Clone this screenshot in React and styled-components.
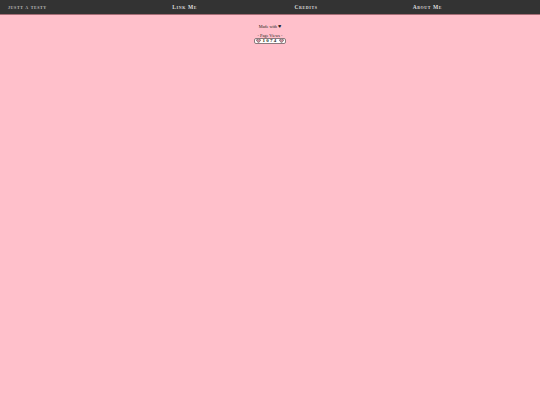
import React from "react"
import styled, { createGlobalStyle } from "styled-components"

const Global = createGlobalStyle`
  html, body {
    margin: 0;
    padding: 0;
    height: 100%;
    background: #ffc0cb;
    font-family: "Liberation Serif", serif;
  }
`

const Nav = styled.nav`
  display: flex;
  align-items: center;
  height: 14px;
  background: #333333;
  border-bottom: 1px solid #a56d76;
  color: #dddddd;
  font-variant: small-caps;
  font-weight: bold;
`

const Brand = styled.div`
  box-sizing: border-box;
  width: 124px;
  padding-left: 8px;
  font-size: 5px;
  letter-spacing: 0.6px;
  color: #bbbbbb;
`

const NavLinks = styled.div`
  width: 364px;
  display: grid;
  grid-template-columns: 1fr 1fr 1fr;
  justify-items: center;
  font-size: 5.5px;
  letter-spacing: 0.6px;
`

const Main = styled.main`
  display: flex;
  flex-direction: column;
  align-items: center;
  color: #222222;
  font-size: 4.25px;
`

const Made = styled.p`
  margin: 9px 0 0;
  line-height: 6px;
`

const MadeHeart = styled.span`
  font-size: 5.5px;
  line-height: 0;
`

const Views = styled.p`
  margin: 3px 0 0;
  line-height: 6px;
`

const Counter = styled.div`
  display: flex;
  align-items: center;
  justify-content: space-between;
  box-sizing: border-box;
  width: 32px;
  height: 6px;
  margin-top: -1px;
  padding: 0 1px;
  background: #ffffff;
  border: 1px solid #8a7a7d;
  border-radius: 2px;
  font-size: 5px;
  font-weight: bold;
  line-height: 4px;
  letter-spacing: 1.3px;
`

const HeartIcon = styled.svg`
  display: block;
  width: 5px;
  height: 4px;
`

const Heart = () => (
  <HeartIcon viewBox="0 0 10 9">
    <path
      d="M5 8.5 1 4.6C-.4 3 .6.6 2.7.6 3.7.6 4.5 1.1 5 2c.5-.9 1.3-1.4 2.3-1.4 2.1 0 3.1 2.4 1.7 4Z"
      fill="#c98f9b"
      stroke="#444444"
      strokeWidth="1.2"
    />
  </HeartIcon>
)

export default function App() {
  return (
    <>
      <Global />
      <Nav>
        <Brand>justt a testy</Brand>
        <NavLinks>
          <span>Link Me</span>
          <span>Credits</span>
          <span>About Me</span>
        </NavLinks>
      </Nav>
      <Main>
        <Made>Made with <MadeHeart>♥</MadeHeart></Made>
        <Views>- Page Views -</Views>
        <Counter>
          <Heart />
          <span>1074</span>
          <Heart />
        </Counter>
      </Main>
    </>
  )
}
